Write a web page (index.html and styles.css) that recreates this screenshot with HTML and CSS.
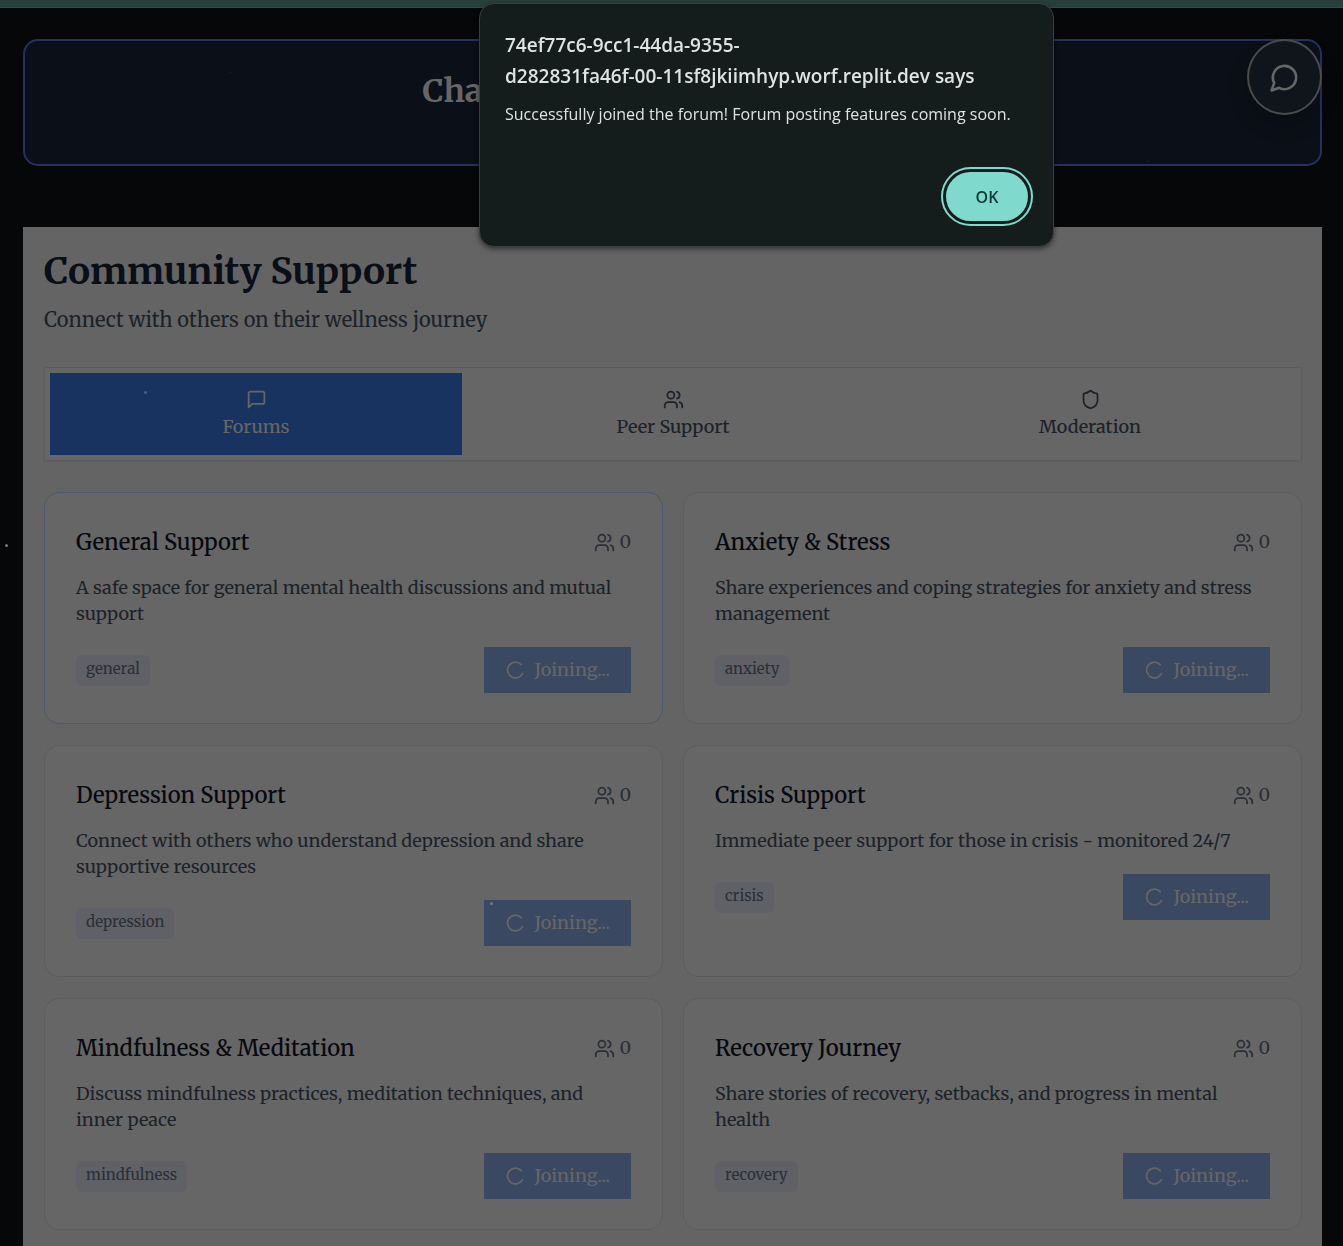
FILE: index.html
```html
<!DOCTYPE html>
<html lang="en">
<head>
<meta charset="utf-8">
<meta name="viewport" content="width=device-width, initial-scale=1">
<title>Community Support</title>
<link rel="stylesheet" href="styles.css">
</head>
<body>
<svg class="sprite" aria-hidden="true">
  <symbol id="users" viewBox="0 0 24 24"><path d="M16 21v-2a4 4 0 0 0-4-4H6a4 4 0 0 0-4 4v2"/><circle cx="9" cy="7" r="4"/><path d="M22 21v-2a4 4 0 0 0-3-3.87"/><path d="M16 3.13a4 4 0 0 1 0 7.75"/></symbol>
  <symbol id="square" viewBox="0 0 24 24"><path d="M21 15a2 2 0 0 1-2 2H7l-4 4V5a2 2 0 0 1 2-2h14a2 2 0 0 1 2 2z"/></symbol>
  <symbol id="shield" viewBox="0 0 24 24"><path d="M20 13c0 5-3.500 7.500-7.660 8.950a1 1 0 0 1-.67-.01C7.500 20.500 4 18 4 13V6a1 1 0 0 1 1-1c2 0 4.500-1.200 6.240-2.720a1.170 1.170 0 0 1 1.520 0C14.510 3.810 17 5 19 5a1 1 0 0 1 1 1z"/></symbol>
  <symbol id="loader" viewBox="0 0 24 24"><path d="M18.500 5.200a9 9 0 1 0 1.400 10.300"/></symbol>
  <symbol id="bubble" viewBox="0 0 24 24"><path d="M7.900 20A9 9 0 1 0 4 16.100L2 22Z"/></symbol>
</svg>

<div class="topbar"></div>
<header class="banner"><h2 class="banner-title">Cha</h2></header>

<main class="panel">
  <h1 class="title">Community Support</h1>
  <p class="subtitle">Connect with others on their wellness journey</p>

  <nav class="tabs" role="tablist">
    <button class="tab tab-active" role="tab" aria-selected="true"><svg class="icon"><use href="#square"/></svg>Forums</button>
    <button class="tab" role="tab" aria-selected="false"><svg class="icon"><use href="#users"/></svg>Peer Support</button>
    <button class="tab" role="tab" aria-selected="false"><svg class="icon"><use href="#shield"/></svg>Moderation</button>
  </nav>

  <section class="grid">
    <article class="card card-current">
      <div class="row"><h3 class="card-title">General Support</h3><span class="count"><svg class="icon"><use href="#users"/></svg>0</span></div>
      <p class="desc">A safe space for general mental health discussions and mutual support</p>
      <div class="row"><span class="tag">general</span><button class="join"><svg class="icon"><use href="#loader"/></svg>Joining...</button></div>
    </article>
    <article class="card">
      <div class="row"><h3 class="card-title">Anxiety &amp; Stress</h3><span class="count"><svg class="icon"><use href="#users"/></svg>0</span></div>
      <p class="desc">Share experiences and coping strategies for anxiety and stress management</p>
      <div class="row"><span class="tag">anxiety</span><button class="join"><svg class="icon"><use href="#loader"/></svg>Joining...</button></div>
    </article>
    <article class="card">
      <div class="row"><h3 class="card-title">Depression Support</h3><span class="count"><svg class="icon"><use href="#users"/></svg>0</span></div>
      <p class="desc">Connect with others who understand depression and share supportive resources</p>
      <div class="row"><span class="tag">depression</span><button class="join"><svg class="icon"><use href="#loader"/></svg>Joining...</button></div>
    </article>
    <article class="card">
      <div class="row"><h3 class="card-title">Crisis Support</h3><span class="count"><svg class="icon"><use href="#users"/></svg>0</span></div>
      <p class="desc">Immediate peer support for those in crisis - monitored 24/7</p>
      <div class="row"><span class="tag">crisis</span><button class="join"><svg class="icon"><use href="#loader"/></svg>Joining...</button></div>
    </article>
    <article class="card">
      <div class="row"><h3 class="card-title">Mindfulness &amp; Meditation</h3><span class="count"><svg class="icon"><use href="#users"/></svg>0</span></div>
      <p class="desc">Discuss mindfulness practices, meditation techniques, and inner peace</p>
      <div class="row"><span class="tag">mindfulness</span><button class="join"><svg class="icon"><use href="#loader"/></svg>Joining...</button></div>
    </article>
    <article class="card">
      <div class="row"><h3 class="card-title">Recovery Journey</h3><span class="count"><svg class="icon"><use href="#users"/></svg>0</span></div>
      <p class="desc">Share stories of recovery, setbacks, and progress in mental health</p>
      <div class="row"><span class="tag">recovery</span><button class="join"><svg class="icon"><use href="#loader"/></svg>Joining...</button></div>
    </article>
  </section>
</main>

<span class="star star-tab"></span>
<span class="star star-edge"></span>
<span class="star star-card"></span>
<span class="star star-small star-banner"></span>
<span class="star star-small star-banner-left"></span>

<button class="chat" aria-label="Open chat"><svg class="chat-icon"><use href="#bubble"/></svg></button>

<div class="dialog" role="alertdialog" aria-labelledby="dialog-title" aria-describedby="dialog-text">
  <h2 class="dialog-title" id="dialog-title">74ef77c6-9cc1-44da-9355-<br>d282831fa46f-00-11sf8jkiimhyp.worf.replit.dev says</h2>
  <p class="dialog-text" id="dialog-text">Successfully joined the forum! Forum posting features coming soon.</p>
  <button class="ok">OK</button>
</div>
</body>
</html>
```
FILE: styles.css
```css
* { box-sizing: border-box; }

body {
  margin: 0;
  background: #060709;
  color: #1c2229;
  font-family: Merriweather, "Liberation Serif", serif;
  font-size: 18px;
  line-height: 26px;
}

h1, h2, h3, p { margin: 0; }

button {
  border: 0;
  padding: 0;
  font: inherit;
  cursor: pointer;
}

.sprite { display: none; }

.icon, .chat-icon {
  width: 21px;
  height: 21px;
  flex: none;
  fill: none;
  stroke: currentColor;
  stroke-width: 2;
  stroke-linecap: round;
  stroke-linejoin: round;
}

.topbar {
  height: 8px;
  background: #27403b;
  border-bottom: 1px solid #3c4744;
}

.banner {
  margin: 31px 21px 61px 23px;
  padding: 31px 20px 53px;
  background: #0b0f17;
  border: 2px solid #27305e;
  border-radius: 15px;
}

.banner-title {
  max-width: 500px;
  margin: 0 auto;
  color: #666;
  font-size: 32px;
  line-height: 39px;
}

.panel {
  margin: 0 21px 0 23px;
  padding: 21px 20px 16px 21px;
  background: #646464;
}

.title {
  color: #0a0e17;
  font-size: 37px;
  font-weight: 700;
  line-height: 46px;
}

.subtitle {
  margin: 10px 0 32px;
  font-size: 20px;
  line-height: 31px;
}

.tabs {
  display: grid;
  grid-template-columns: repeat(3, 1fr);
  gap: 5px;
  padding: 5px;
  margin-bottom: 31px;
  background: #666;
  border: 1px solid #5c5d5f;
  box-shadow: 0 1px 2px rgba(0, 0, 0, .05);
}

.tab {
  display: flex;
  flex-direction: column;
  align-items: center;
  gap: 4px;
  padding: 16px 10px 15px;
  background: transparent;
  color: #1c2229;
  font-weight: 500;
}

.tab-active {
  background: #18335f;
  color: #666;
}

.grid {
  display: grid;
  grid-template-columns: 1fr 1fr;
  gap: 21px 20px;
}

.card {
  padding: 32px 31px 30px;
  background: #666;
  border: 1px solid #5c5d5f;
  border-radius: 15px;
}

.card-current { border-color: #4a5a70; }

.row {
  display: flex;
  justify-content: space-between;
  align-items: center;
}

.card-title {
  color: #060910;
  font-size: 22px;
  font-weight: 500;
  line-height: 34px;
}

.count {
  display: flex;
  align-items: center;
  gap: 4px;
  color: #2b2f37;
}

.desc { margin: 16px 0 20px; }

.tag {
  padding: 1px 10px 4px;
  background: #606167;
  border-radius: 6px;
  color: #2b2f37;
  font-size: 15px;
}

.join {
  display: flex;
  align-items: center;
  gap: 9px;
  padding: 10px 21px;
  background: #3b4862;
  color: #666;
  font-weight: 500;
}

.star {
  position: absolute;
  width: 3px;
  height: 3px;
  border-radius: 50%;
  background: #76797f;
}

.star-tab { left: 144px; top: 391px; background: #4c5f80; }
.star-edge { left: 5px; top: 544px; }
.star-card { left: 490px; top: 902px; }
.star-small { width: 1px; height: 1px; background: #3a3e46; }
.star-banner { left: 1148px; top: 161px; }
.star-banner-left { left: 230px; top: 72px; background: #1c2744; }

.chat {
  position: fixed;
  top: 39px;
  right: 21px;
  display: flex;
  align-items: center;
  justify-content: center;
  width: 75px;
  height: 76px;
  background: #10151c;
  border: 2px solid #4b4b4b;
  border-radius: 50%;
  box-shadow: 0 10px 20px rgba(0, 0, 0, .2);
  color: #666;
}

.chat-icon { width: 31px; height: 31px; }

.dialog {
  position: fixed;
  top: 3px;
  left: 479px;
  display: flex;
  flex-direction: column;
  width: 575px;
  padding: 26px 25px 25px;
  background: #151d1c;
  border: 1px solid #38403f;
  border-radius: 15px;
  box-shadow: 0 2px 5px rgba(0, 0, 0, .5);
  color: #dde4e2;
  font-family: "Segoe UI", "Open Sans", "Noto Sans", sans-serif;
}

.dialog-title {
  font-size: 19px;
  font-weight: 600;
  line-height: 31px;
}

.dialog-text {
  margin: 12px 0 47px;
  font-size: 16px;
  line-height: 21px;
}

.ok {
  align-self: flex-end;
  width: 82px;
  height: 49px;
  background: #80d9cd;
  border-radius: 25px;
  outline: 2px solid #80d9cd;
  outline-offset: 3px;
  color: #0c3b36;
  font-size: 16px;
  font-weight: 600;
}
```
